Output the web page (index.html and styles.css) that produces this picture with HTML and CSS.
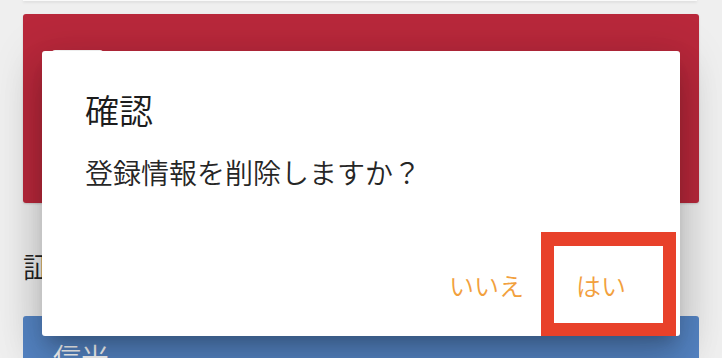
FILE: index.html
```html
<!DOCTYPE html>
<html lang="ja">
<head>
<meta charset="utf-8">
<title>確認</title>
<link rel="stylesheet" href="styles.css">
</head>
<body>
<div class="screen">
  <div class="page">
    <div class="card-top"></div>
    <div class="card-red">
      <div class="red-tab">詳細</div>
    </div>
    <div class="label">証明書</div>
    <div class="card-blue">信米</div>
  </div>

  <div class="dialog" role="dialog">
    <div class="dialog-title">確認</div>
    <div class="dialog-message">登録情報を削除しますか？</div>
    <div class="dialog-actions">
      <button class="btn">いいえ</button>
      <button class="btn">はい</button>
    </div>
    <div class="highlight"></div>
  </div>
</div>
</body>
</html>
```

FILE: styles.css
```css
* { box-sizing: border-box; }

html, body {
  margin: 0;
  padding: 0;
}

body {
  width: 722px;
  height: 358px;
  overflow: hidden;
  background: #efefef;
  font-family: "Noto Sans CJK JP", "Noto Sans", sans-serif;
  font-weight: 350;
}

.screen {
  position: relative;
  width: 722px;
  height: 358px;
  overflow: hidden;
}

.page {
  display: flex;
  flex-direction: column;
  padding: 0 23px;
}

.card-top {
  height: 1px;
  background: #fafafa;
  box-shadow: 0 1px 3px rgba(0, 0, 0, 0.18);
  margin-right: 2px;
}

.card-red {
  margin-top: 13px;
  height: 189px;
  background: #b9283b;
  border-radius: 3px;
  padding: 36px 0 0 29px;
  box-shadow: 0 1px 2px rgba(0, 0, 0, 0.15);
}

.red-tab {
  width: 51px;
  height: 24px;
  background: #ffffff;
  border-radius: 3px 3px 0 0;
  color: #b9283b;
  font-size: 14px;
  line-height: 24px;
  text-align: center;
}

.label {
  margin-top: 46px;
  font-size: 28px;
  line-height: 34px;
  color: #222222;
}

.card-blue {
  margin-top: 33px;
  height: 80px;
  background: #5585c5;
  border-radius: 3px;
  padding: 24px 0 0 30px;
  color: #ffffff;
  font-size: 28px;
  line-height: 34px;
}

.dialog {
  position: absolute;
  left: 42px;
  top: 51px;
  width: 638px;
  height: 285px;
  background: #ffffff;
  border-radius: 3px;
  display: flex;
  flex-direction: column;
  padding: 39px 42px 36px 43px;
  box-shadow:
    0 11px 15px -7px rgba(0, 0, 0, 0.2),
    0 24px 38px 3px rgba(0, 0, 0, 0.14),
    0 9px 46px 8px rgba(0, 0, 0, 0.12);
}

.dialog-title {
  font-size: 34px;
  line-height: 40px;
  color: #1c1c1c;
}

.dialog-message {
  margin-top: 25px;
  font-size: 28px;
  line-height: 34px;
  color: #262626;
}

.dialog-actions {
  margin-top: auto;
  display: flex;
  justify-content: flex-end;
  gap: 28px;
}

.btn {
  border: 0;
  background: transparent;
  padding: 0 12px;
  font-family: inherit;
  font-weight: 350;
  font-size: 25px;
  line-height: 30px;
  color: #f2a03d;
}

.highlight {
  position: absolute;
  left: 499px;
  top: 181px;
  width: 135px;
  height: 104px;
  border: 13px solid #e8412a;
  border-top-width: 14px;
}
```
